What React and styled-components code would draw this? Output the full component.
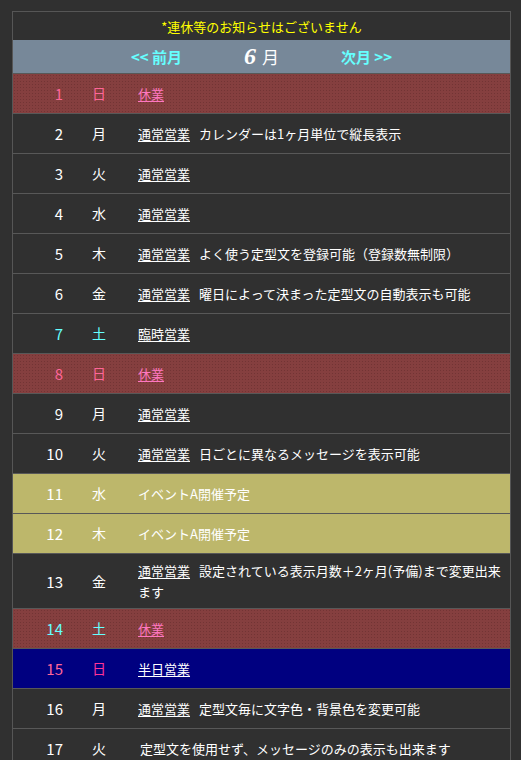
import React from "react";
import styled, { createGlobalStyle, css } from "styled-components";

const Global = createGlobalStyle`
  html, body { margin: 0; padding: 0; background: #303030; }
  body { font-family: "Noto Sans CJK JP", "Noto Sans", sans-serif; color: #fff; }
`;

const Calendar = styled.div`
  margin: 11px 0 0 12px;
  width: 499px;
  border: 1px solid #565656;
  box-sizing: border-box;
`;

const Notice = styled.div`
  height: 28px;
  display: flex;
  align-items: center;
  justify-content: center;
  color: #ffff00;
  font-size: 13px;
`;

const Nav = styled.div`
  height: 33px;
  background: #778899;
  display: flex;
  align-items: center;
  justify-content: center;
`;

const NavItem = styled.div`
  width: 105px;
  text-align: center;
  display: flex;
  align-items: baseline;
  justify-content: center;
  gap: 6px;
`;

const NavLink = styled.a`
  color: #66ffff;
  font-weight: bold;
  font-size: 15px;
  text-decoration: none;
`;

const MonthNum = styled.span`
  font-family: "Liberation Serif", "DejaVu Serif", serif;
  font-style: italic;
  font-weight: bold;
  font-size: 24px;
  color: #fff;
`;

const MonthLabel = styled.span`
  font-size: 17px;
  color: #fff;
`;

const holidayBg = css`
  background-color: #853f3f;
  background-image: radial-gradient(circle, #723434 0.6px, transparent 1px);
  background-size: 3px 3px;
`;

const bgs = {
  normal: css`background: #303030;`,
  holiday: holidayBg,
  event: css`background: #bdb76b;`,
  half: css`background: #000080;`,
};

const Row = styled.div`
  display: grid;
  grid-template-columns: 50px 72px 1fr;
  align-items: center;
  min-height: 40px;
  padding: 6px 4px 6px 0;
  box-sizing: border-box;
  border-top: 1px solid #585858;
  font-size: 13px;
  line-height: 21px;
  ${(p) => bgs[p.$kind]}
`;

const dayColors = { sun: "#ff6699", sat: "#66ffff", none: "#ffffff" };

const DateCell = styled.div`
  text-align: right;
  font-size: 15px;
  color: ${(p) => dayColors[p.$c]};
`;

const DayCell = styled.div`
  text-align: center;
  font-size: 14px;
  color: ${(p) => (p.$strong ? "#ff3399" : dayColors[p.$c])};
`;

const Content = styled.div`
  padding-left: 3px;
  color: #fff;
`;

const Status = styled.a`
  color: ${(p) => (p.$pink ? "#ff77c0" : "#ffffff")};
  text-decoration: underline;
  text-underline-offset: 2px;
`;

const Message = styled.span`
  margin-left: 9px;
`;

const Plain = styled.span`
  padding-left: ${(p) => (p.$indent ? "2px" : "0")};
`;

const days = [
  { d: 1, w: "日", c: "sun", kind: "holiday", s: "休業", pink: true },
  { d: 2, w: "月", s: "通常営業", m: "カレンダーは1ヶ月単位で縦長表示" },
  { d: 3, w: "火", s: "通常営業" },
  { d: 4, w: "水", s: "通常営業" },
  { d: 5, w: "木", s: "通常営業", m: "よく使う定型文を登録可能（登録数無制限）" },
  { d: 6, w: "金", s: "通常営業", m: "曜日によって決まった定型文の自動表示も可能" },
  { d: 7, w: "土", c: "sat", s: "臨時営業" },
  { d: 8, w: "日", c: "sun", kind: "holiday", s: "休業", pink: true },
  { d: 9, w: "月", s: "通常営業" },
  { d: 10, w: "火", s: "通常営業", m: "日ごとに異なるメッセージを表示可能" },
  { d: 11, w: "水", kind: "event", plain: "イベントA開催予定" },
  { d: 12, w: "木", kind: "event", plain: "イベントA開催予定" },
  { d: 13, w: "金", s: "通常営業", m: "設定されている表示月数＋2ヶ月(予備)まで変更出来ます" },
  { d: 14, w: "土", c: "sat", kind: "holiday", s: "休業", pink: true },
  { d: 15, w: "日", c: "sun", kind: "half", s: "半日営業", strong: true },
  { d: 16, w: "月", s: "通常営業", m: "定型文毎に文字色・背景色を変更可能" },
  { d: 17, w: "火", plain: "定型文を使用せず、メッセージのみの表示も出来ます", indent: true },
];

export default function App() {
  return (
    <>
      <Global />
      <Calendar>
        <Notice>*連休等のお知らせはございません</Notice>
        <Nav>
          <NavItem>
            <NavLink href="#">&lt;&lt; 前月</NavLink>
          </NavItem>
          <NavItem>
            <MonthNum>6</MonthNum>
            <MonthLabel>月</MonthLabel>
          </NavItem>
          <NavItem>
            <NavLink href="#">次月 &gt;&gt;</NavLink>
          </NavItem>
        </Nav>
        {days.map((r) => (
          <Row key={r.d} $kind={r.kind || "normal"}>
            <DateCell $c={r.c || "none"}>{r.d}</DateCell>
            <DayCell $c={r.c || "none"} $strong={r.strong}>{r.w}</DayCell>
            <Content>
              {r.s && (
                <Status href="#" $pink={r.pink}>
                  {r.s}
                </Status>
              )}
              {r.m && <Message>{r.m}</Message>}
              {r.plain && <Plain $indent={r.indent}>{r.plain}</Plain>}
            </Content>
          </Row>
        ))}
      </Calendar>
    </>
  );
}
